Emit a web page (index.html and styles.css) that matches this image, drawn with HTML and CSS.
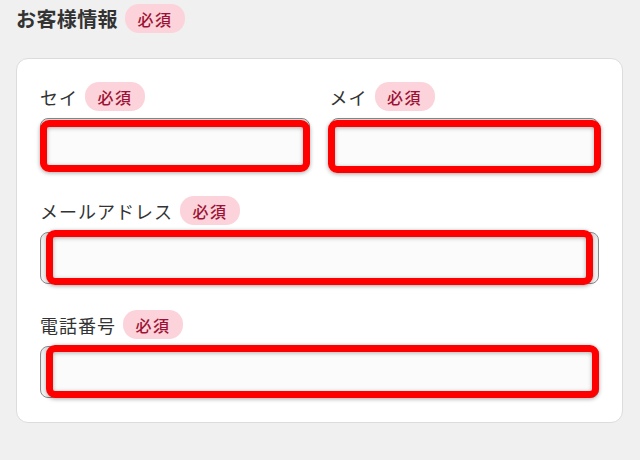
FILE: index.html
```html
<!DOCTYPE html>
<html lang="ja">
<head>
<meta charset="utf-8">
<link rel="stylesheet" href="styles.css">
</head>
<body>
<div class="page">
  <div class="section-title">
    <h2 class="title">お客様情報</h2>
    <span class="badge">必須</span>
  </div>
  <div class="card">
    <div class="name-row">
      <div class="field">
        <div class="label-row"><span class="label">セイ</span><span class="badge">必須</span></div>
        <div class="input-wrap">
          <input class="input" type="text">
          <span class="mark mark-sei"></span>
        </div>
      </div>
      <div class="field">
        <div class="label-row"><span class="label">メイ</span><span class="badge">必須</span></div>
        <div class="input-wrap">
          <input class="input" type="text">
          <span class="mark mark-mei"></span>
        </div>
      </div>
    </div>
    <div class="field">
      <div class="label-row"><span class="label">メールアドレス</span><span class="badge">必須</span></div>
      <div class="input-wrap">
        <input class="input" type="email">
        <span class="mark mark-mail"></span>
      </div>
    </div>
    <div class="field">
      <div class="label-row"><span class="label">電話番号</span><span class="badge">必須</span></div>
      <div class="input-wrap">
        <input class="input" type="tel">
        <span class="mark mark-tel"></span>
      </div>
    </div>
  </div>
</div>
</body>
</html>
```
FILE: styles.css
```css
* { box-sizing: border-box; }
html, body { margin: 0; padding: 0; }
body {
  background: #f0f0f0;
  font-family: "Noto Sans CJK JP", "Noto Sans", sans-serif;
  color: #333;
  width: 640px;
  height: 460px;
  overflow: hidden;
}
.page {
  padding: 4px 17px 0 16px;
}
.section-title {
  display: flex;
  align-items: center;
  gap: 7px;
  height: 29px;
}
.title {
  margin: 0;
  font-size: 20px;
  font-weight: 700;
  letter-spacing: 0.4px;
  line-height: 29px;
  color: #333;
}
.badge {
  display: inline-flex;
  align-items: center;
  justify-content: center;
  height: 29px;
  width: 60px;
  border-radius: 14px;
  background: #fcd3da;
  color: #9c1236;
  font-size: 16px;
  letter-spacing: 1.5px;
  font-weight: 500;
}
.card {
  margin-top: 25px;
  background: #fff;
  border: 1px solid #dcdcdc;
  border-radius: 12px;
  padding: 23px 23px 23px 23px;
  display: flex;
  flex-direction: column;
  gap: 26px;
  height: 365px;
}
.name-row {
  display: grid;
  grid-template-columns: 1fr 1fr;
  gap: 20px;
}
.field {
  display: flex;
  flex-direction: column;
  gap: 7px;
}
.label-row {
  display: flex;
  align-items: center;
  gap: 7px;
  height: 29px;
}
.label {
  font-size: 18px;
  letter-spacing: 1px;
  font-weight: 400;
  color: #333;
}
.input-wrap {
  position: relative;
  height: 52px;
}
.input {
  display: block;
  width: 100%;
  height: 100%;
  border: 1px solid #8a8a8a;
  border-radius: 8px;
  background: #fbfbfb;
  box-shadow: inset 0 2px 4px rgba(0,0,0,0.12);
  outline: none;
  margin: 0;
}
.mark {
  position: absolute;
  border: 7px solid #ff0000;
  border-radius: 9px;
  box-shadow: 0 1px 4px rgba(0,0,0,0.35), inset 0 1px 4px rgba(0,0,0,0.3);
  pointer-events: none;
}
.mark-sei { left: 0; right: 0; top: 2px; bottom: -2px; }
.mark-mei { left: -2px; right: -2px; top: 2px; bottom: -3px; }
.mark-mail { left: 6px; right: 6px; top: -2px; bottom: -1px; }
.mark-tel { left: 6px; right: 0; top: -1px; bottom: 0; }
```
